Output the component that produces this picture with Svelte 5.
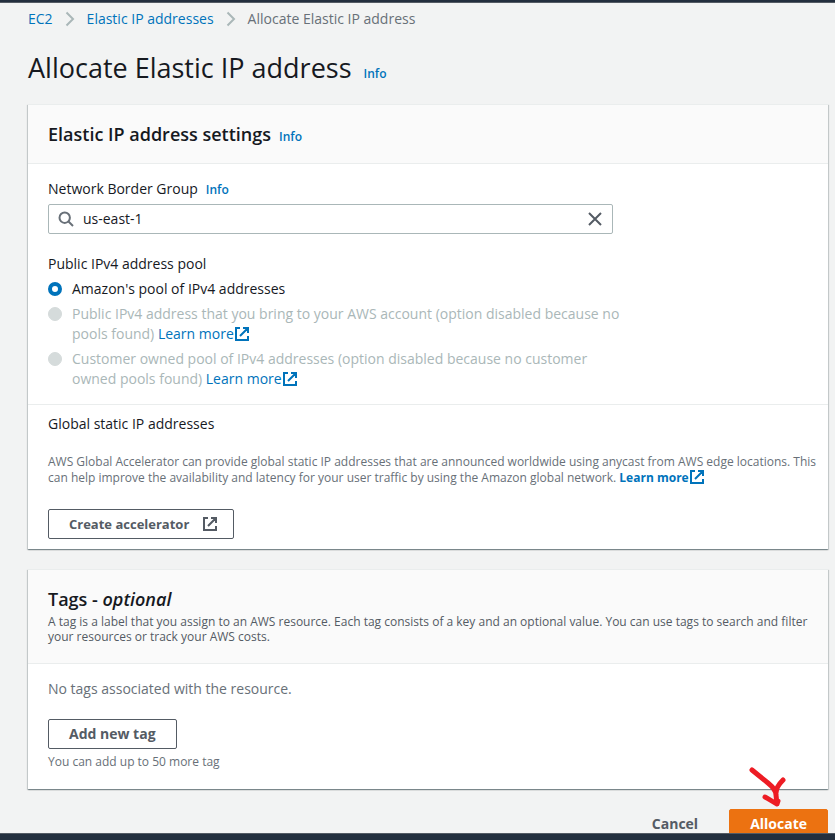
<script>
  let region = $state('us-east-1');
  let pool = $state('amazon');

  const crumbs = ['EC2', 'Elastic IP addresses'];
  const pools = [
    { id: 'amazon', text: "Amazon's pool of IPv4 addresses", disabled: false },
    {
      id: 'byoip',
      text: 'Public IPv4 address that you bring to your AWS account (option disabled because no pools found)',
      disabled: true
    },
    {
      id: 'customer',
      text: 'Customer owned pool of IPv4 addresses (option disabled because no customer owned pools found)',
      disabled: true
    }
  ];
</script>

{#snippet external()}
  <svg class="external" viewBox="0 0 16 16" width="16" height="16" aria-hidden="true">
    <path d="M6 2H2v12h12v-4M9 2h5v5M6 10l7.5-7.5" />
  </svg>
{/snippet}

<div class="page">
  <div class="topbar"></div>

  <main>
    <nav aria-label="Breadcrumb">
      {#each crumbs as crumb}
        <a href="#top">{crumb}</a>
        <svg viewBox="0 0 10 16" width="10" height="16" aria-hidden="true">
          <path d="M1.5 1.5 8 8l-6.5 6.5" />
        </svg>
      {/each}
      <span>Allocate Elastic IP address</span>
    </nav>

    <div class="title">
      <h1>Allocate Elastic IP address</h1>
      <a class="info" href="#info">Info</a>
    </div>

    <section class="panel">
      <header>
        <div class="heading">
          <h2>Elastic IP address settings</h2>
          <a class="info" href="#info">Info</a>
        </div>
      </header>

      <div class="settings">
        <div class="heading">
          <label for="region">Network Border Group</label>
          <a class="info" href="#info">Info</a>
        </div>
        <div class="search">
          <svg viewBox="0 0 16 16" width="16" height="16" aria-hidden="true">
            <circle cx="6.7" cy="6.7" r="5.2" />
            <path d="m10.5 10.5 4.5 4.5" />
          </svg>
          <input id="region" type="text" bind:value={region} />
          <button type="button" aria-label="Clear" onclick={() => (region = '')}>
            <svg viewBox="0 0 16 16" width="16" height="16" aria-hidden="true">
              <path d="m2 2 12 12M14 2 2 14" />
            </svg>
          </button>
        </div>

        <fieldset>
          <legend>Public IPv4 address pool</legend>
          {#each pools as item}
            <div class="option" class:disabled={item.disabled}>
              <input
                type="radio"
                name="pool"
                id={item.id}
                value={item.id}
                disabled={item.disabled}
                bind:group={pool}
              />
              <div>
                <label for={item.id}>{item.text}</label>
                {#if item.disabled}
                  <a href="#learn">Learn more{@render external()}</a>
                {/if}
              </div>
            </div>
          {/each}
        </fieldset>
      </div>

      <div class="global">
        <h3>Global static IP addresses</h3>
        <p class="small">
          AWS Global Accelerator can provide global static IP addresses that are announced worldwide
          using anycast from AWS edge locations. This can help improve the availability and latency
          for your user traffic by using the Amazon global network.
          <a class="strong" href="#learn">Learn more{@render external()}</a>
        </p>
        <button type="button" class="btn">Create accelerator {@render external()}</button>
      </div>
    </section>

    <section class="panel">
      <header class="tags-header">
        <h2>Tags - <em>optional</em></h2>
        <p>
          A tag is a label that you assign to an AWS resource. Each tag consists of a key and an
          optional value. You can use tags to search and filter your resources or track your AWS
          costs.
        </p>
      </header>
      <div class="tags">
        <p>No tags associated with the resource.</p>
        <button type="button" class="btn">Add new tag</button>
        <p class="small">You can add up to 50 more tag</p>
      </div>
    </section>

    <div class="actions">
      <button type="button" class="btn link">Cancel</button>
      <button type="button" class="btn primary">Allocate</button>
      <svg class="arrow" viewBox="0 0 38 42" width="38" height="42" aria-hidden="true">
        <path d="M3 3 19 16c5 4 8 8 8 12l1 9M34 13c-4 4-7 8-7 13M16 30c4 2 8 5 12 7l1-3" />
      </svg>
    </div>
  </main>

  <div class="bottombar"></div>
</div>

<style>
  :global(body) {
    margin: 0;
    background: #f2f3f3;
  }

  .page {
    box-sizing: border-box;
    height: 100vh;
    overflow: hidden;
    display: flex;
    flex-direction: column;
    color: #16191f;
    font: 14px/20px 'Open Sans', 'Noto Sans', sans-serif;
  }

  .topbar {
    flex: none;
    height: 3px;
    box-sizing: border-box;
    background: #232f3e;
    border-bottom: 1px solid #545b64;
  }

  .bottombar {
    position: fixed;
    left: 0;
    right: 0;
    bottom: 0;
    height: 7px;
    box-sizing: border-box;
    background: #232f3e;
    border-top: 1px solid #545b64;
  }

  main {
    flex: 1;
    min-height: 0;
    padding: 6px 7px 0 28px;
  }

  a {
    color: #0073bb;
    text-decoration: none;
  }

  h1,
  h2,
  h3,
  p {
    margin: 0;
  }

  svg {
    fill: none;
    stroke: currentColor;
    stroke-width: 2;
  }

  nav {
    display: flex;
    align-items: center;
    gap: 12px;
    color: #687078;
  }

  nav svg {
    color: #aab7b8;
  }

  .title {
    display: flex;
    align-items: baseline;
    gap: 12px;
    padding: 21px 0 18px;
  }

  h1 {
    font-size: 27px;
    line-height: 36px;
    font-weight: 400;
  }

  h2 {
    font-size: 18px;
    line-height: 22px;
    font-weight: 600;
  }

  h3 {
    font-size: 14px;
    line-height: 20px;
    font-weight: 400;
  }

  .info {
    font-size: 12px;
    line-height: 16px;
    font-weight: 600;
  }

  .heading {
    display: flex;
    align-items: baseline;
    gap: 8px;
  }

  .panel {
    background: #fff;
    border-top: 1px solid #eaeded;
    box-shadow:
      0 1px 1px 0 rgba(0, 28, 36, 0.3),
      1px 1px 1px 0 rgba(0, 28, 36, 0.15),
      -1px 1px 1px 0 rgba(0, 28, 36, 0.15);
    margin-bottom: 20px;
  }

  header {
    padding: 18px 20px;
    background: #fafafa;
    border-bottom: 1px solid #eaeded;
  }

  .settings {
    padding: 15px 20px;
  }

  .search {
    display: flex;
    align-items: center;
    box-sizing: border-box;
    max-width: 565px;
    height: 30px;
    margin: 5px 0 20px;
    padding: 0 9px;
    border: 1px solid #aab7b8;
    border-radius: 2px;
    color: #687078;
  }

  .search input {
    flex: 1;
    min-width: 0;
    padding: 0 9px;
    border: 0;
    outline: 0;
    background: none;
    color: #16191f;
    font: inherit;
  }

  .search button {
    display: flex;
    padding: 0;
    border: 0;
    background: none;
    color: #545b64;
  }

  fieldset {
    max-width: 577px;
    margin: 0;
    padding: 0;
    border: 0;
  }

  legend {
    padding: 0;
  }

  .option {
    display: flex;
    gap: 10px;
    margin-top: 5px;
  }

  .option input {
    flex: none;
    appearance: none;
    box-sizing: border-box;
    width: 14px;
    height: 14px;
    margin: 3px 0;
    border: 1px solid #d5dbdb;
    border-radius: 50%;
    background: #d5dbdb;
  }

  .option input:checked {
    border: 4px solid #0073bb;
    background: #fff;
  }

  .disabled {
    color: #aab7b8;
  }

  .external {
    margin: -4px 0;
    vertical-align: 1px;
  }

  .global {
    padding: 9px 8px 10px 20px;
    border-top: 1px solid #eaeded;
  }

  .small {
    color: #687078;
    font-size: 12px;
    line-height: 16px;
  }

  .strong {
    font-weight: 700;
  }

  .global .small {
    padding: 20px 0 23px;
  }

  .btn {
    display: inline-flex;
    align-items: center;
    box-sizing: border-box;
    height: 30px;
    padding: 0 20px;
    border: 1px solid #545b64;
    border-radius: 2px;
    background: #fff;
    color: #545b64;
    font: 700 14px/20px 'Open Sans', 'Noto Sans', sans-serif;
    vertical-align: top;
  }

  .global .btn {
    gap: 13px;
    padding: 0 15px 0 20px;
    font-size: 13px;
  }

  .btn.link {
    border-color: transparent;
    background: none;
  }

  .btn.primary {
    border-color: #ec7211;
    background: #ec7211;
    color: #fff;
  }

  .tags-header {
    padding: 18px 20px;
  }

  .tags-header p {
    padding: 4px 0 1px;
    color: #545b64;
    font-size: 12px;
    line-height: 15px;
  }

  .tags {
    padding: 15px 20px 19px;
    color: #687078;
  }

  .tags .btn {
    margin: 20px 0 5px;
  }

  .actions {
    position: relative;
    display: flex;
    justify-content: flex-end;
    gap: 10px;
  }

  .arrow {
    position: absolute;
    right: 41px;
    top: -42px;
    color: #ed1c24;
    stroke-width: 5;
    stroke-linecap: round;
    stroke-linejoin: round;
  }
</style>
